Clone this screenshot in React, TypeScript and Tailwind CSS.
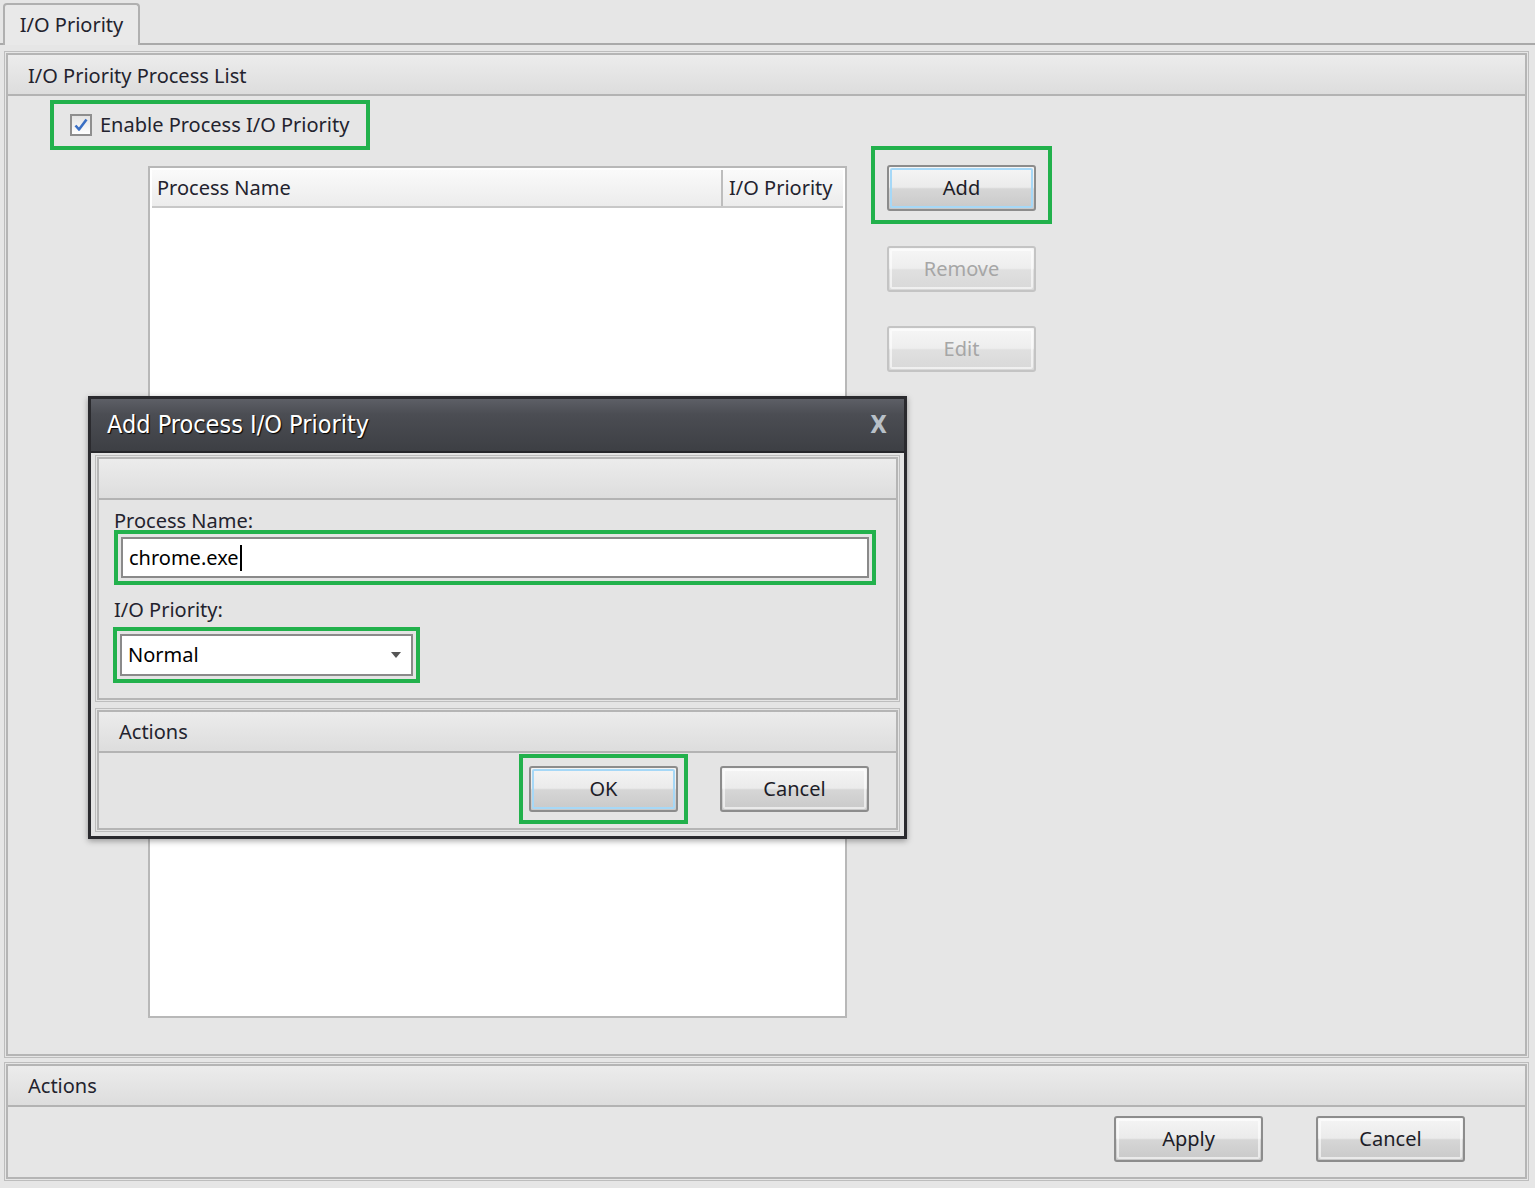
import React from 'react'

const FONT = { fontFamily: '"Noto Sans", "Open Sans", "DejaVu Sans", sans-serif' }
const TITLE_FONT = { fontFamily: '"DejaVu Sans Condensed", "Liberation Sans Narrow", "Noto Sans", sans-serif' }

function WinButton({ label, focused, disabled }: { label: string; focused?: boolean; disabled?: boolean }) {
  return (
    <div
      className={`h-[46px] w-[149px] rounded-[3px] border-2 p-[1px] ${
        disabled
          ? 'border-[#c4c4c4] bg-[linear-gradient(to_bottom,#f6f6f6_0%,#eeeeee_48%,#e0e0e0_52%,#d8d8d8_100%)]'
          : 'border-[#8c8c8c] bg-[linear-gradient(to_bottom,#f5f5f5_0%,#ebebeb_48%,#d6d6d6_52%,#c9c9c9_100%)]'
      }`}
    >
      <div
        className={`flex h-full w-full items-center justify-center rounded-[2px] border-2 text-[20px] ${
          focused ? 'border-[#a6d8f7]' : 'border-white/60'
        } ${disabled ? 'text-[#a6a6a6]' : 'text-[#1d1d28]'}`}
      >
        {label}
      </div>
    </div>
  )
}

function GroupHeader({ title, className = 'h-[41px]' }: { title?: string; className?: string }) {
  return (
    <div className={`flex shrink-0 items-center border-b-2 border-[#b3b3b3] bg-[linear-gradient(to_bottom,#ececec,#dddddd)] pl-[20px] text-[20px] text-[#23232e] ${className}`}>
      {title}
    </div>
  )
}

function GroupBox({ className = '', children }: { className?: string; children: React.ReactNode }) {
  return (
    <div className={`shrink-0 border border-[#bdbdbd] p-[1px] ${className}`}>
      <div className="flex h-full flex-col border-2 border-[#b5b5b5]">{children}</div>
    </div>
  )
}

function Highlight({ children, className = '' }: { children: React.ReactNode; className?: string }) {
  return <div className={`border-[4px] border-[#22b14c] ${className}`}>{children}</div>
}

export default function App() {
  return (
    <div className="relative flex h-[1188px] w-[1535px] flex-col overflow-hidden bg-[#e6e6e6] text-[#23232e]" style={FONT}>
      {/* Tab strip */}
      <div className="flex h-[45px] shrink-0 items-end border-b-2 border-[#a9a9a9]">
        <div className="-mb-[2px] ml-[3px] flex h-[42px] w-[137px] items-center justify-center rounded-t-[4px] border-2 border-b-0 border-[#b0b0b0] bg-[#e9e9e9] text-[20px]">
          I/O Priority
        </div>
      </div>

      {/* Process list group */}
      <GroupBox className="ml-[4px] mr-[6px] mt-[6px] h-[1007px]">
        <GroupHeader title="I/O Priority Process List" className="h-[41px] pt-[3px]" />
        <div className="pl-[42px] pt-[4px]">
          <Highlight className="flex h-[50px] w-[320px] items-center gap-[8px] pl-[16px]">
            <div className="flex h-[22px] w-[22px] items-center justify-center border-2 border-[#8e8e8e] bg-[linear-gradient(to_bottom,#e4e4e4,#ffffff)]">
              <svg viewBox="0 0 16 16" className="h-[16px] w-[16px]">
                <path d="M2.5 8.5 L6 12.5 L13.5 2.5" fill="none" stroke="#3a6fc4" strokeWidth="2.6" strokeLinejoin="round" />
              </svg>
            </div>
            <span className="text-[20px]">Enable Process I/O Priority</span>
          </Highlight>

          <div className="flex">
            {/* Process list */}
            <div className="ml-[98px] mt-[16px] h-[852px] w-[699px] border-2 border-[#b8b8b8] bg-white p-[2px]">
              <div className="flex h-[38px] border-b-2 border-[#c8c8c8] bg-[linear-gradient(to_bottom,#fafafa,#ececec)] text-[20px]">
                <div className="flex flex-1 items-center border-r-2 border-[#bdbdbd] pl-[5px]">Process Name</div>
                <div className="flex w-[120px] items-center pl-[6px]">I/O Priority</div>
              </div>
            </div>

            {/* Side buttons */}
            <div className="ml-[24px] -mt-[4px] flex flex-col items-center">
              <Highlight className="px-[12px] pb-[9px] pt-[15px]">
                <WinButton label="Add" focused />
              </Highlight>
              <div className="mt-[22px]">
                <WinButton label="Remove" disabled />
              </div>
              <div className="mt-[34px]">
                <WinButton label="Edit" disabled />
              </div>
            </div>
          </div>
        </div>
      </GroupBox>

      {/* Bottom actions group */}
      <GroupBox className="ml-[4px] mr-[6px] mt-[4px] h-[119px]">
        <GroupHeader title="Actions" className="h-[41px]" />
        <div className="flex flex-1 items-center justify-end gap-[53px] pb-[6px] pr-[60px]">
          <WinButton label="Apply" />
          <WinButton label="Cancel" />
        </div>
      </GroupBox>

      {/* Modal dialog */}
      <div className="absolute left-[88px] top-[396px] flex h-[443px] w-[819px] flex-col border-[3px] border-[#2a2a2e] bg-[#e4e4e4] shadow-[0_2px_6px_rgba(0,0,0,0.35)]">
        <div className="flex h-[54px] shrink-0 items-center justify-between border-b-2 border-[#26272b] bg-[linear-gradient(to_bottom,#5d5f66_0%,#4b4d53_30%,#3d3f44_100%)] pl-[16px] pr-[17px]">
          <span className="text-[25px] text-white [text-shadow:1px_1px_1px_#000]" style={TITLE_FONT}>
            Add Process I/O Priority
          </span>
          <span className="text-[24px] font-bold text-[#b8c0c8]" style={TITLE_FONT}>X</span>
        </div>
        <div className="flex flex-1 flex-col gap-[6px] px-[4px] pt-[2px]">
          <GroupBox className="h-[247px]">
            <GroupHeader />
            <div className="pl-[15px] pt-[9px]">
              <div className="text-[20px] leading-[24px]">Process Name:</div>
              <Highlight className="-mt-[3px] w-[762px] p-[3px]">
                <div className="flex h-[41px] items-center border-2 border-[#8a8a8a] bg-white pl-[6px] text-[20px] text-black">
                  chrome.exe<span className="ml-[1px] inline-block h-[26px] w-[2px] bg-black" />
                </div>
              </Highlight>
              <div className="mt-[13px] text-[20px] leading-[24px]">I/O Priority:</div>
              <Highlight className="-ml-[1px] mt-[5px] w-[307px] p-[3px]">
                <div className="flex h-[42px] items-center justify-between border-2 border-[#8a8a8a] bg-white pl-[6px] pr-[10px] text-[20px] text-black">
                  Normal
                  <svg viewBox="0 0 10 6" className="h-[6px] w-[10px]">
                    <path d="M0 0 H10 L5 6 Z" fill="#555" />
                  </svg>
                </div>
              </Highlight>
            </div>
          </GroupBox>

          <GroupBox className="h-[124px]">
            <GroupHeader title="Actions" />
            <div className="flex flex-1 items-start justify-end gap-[32px] pr-[27px] pt-[1px]">
              <Highlight className="px-[6px] py-[8px]">
                <WinButton label="OK" focused />
              </Highlight>
              <div className="pt-[12px]">
                <WinButton label="Cancel" />
              </div>
            </div>
          </GroupBox>
        </div>
      </div>
    </div>
  )
}
